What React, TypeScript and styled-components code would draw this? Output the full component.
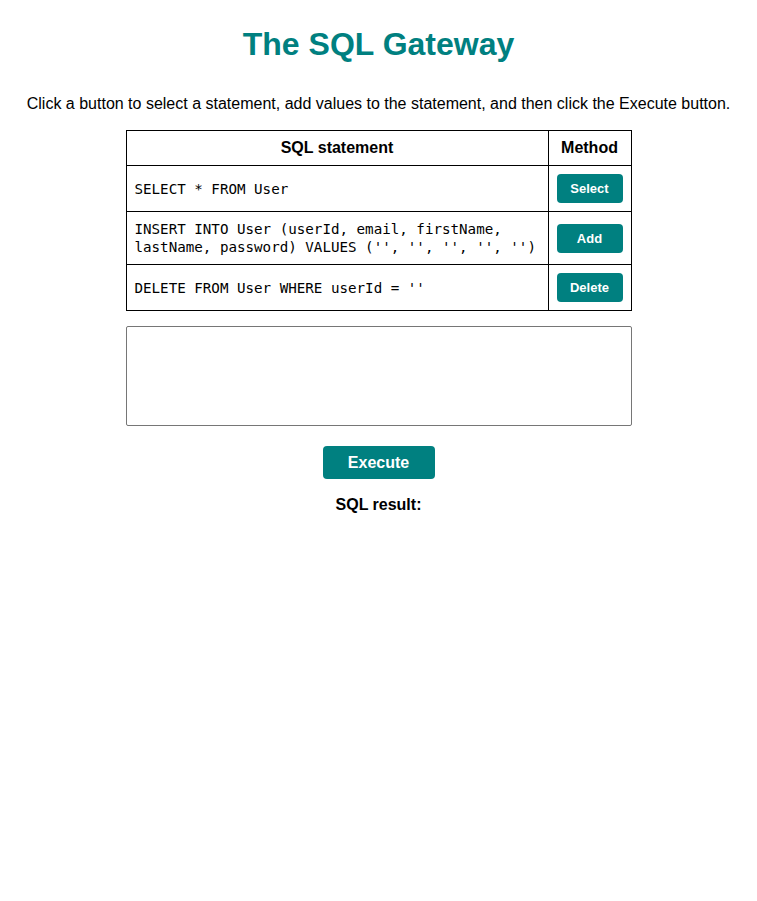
import React from "react";
import styled, { createGlobalStyle } from "styled-components";

const Global = createGlobalStyle`
  body {
    margin: 8px;
    font-family: "Liberation Sans", Arial, sans-serif;
    background: #ffffff;
    color: #000000;
  }
`;

const Page = styled.main`
  display: flex;
  flex-direction: column;
  align-items: center;
`;

const Title = styled.h1`
  color: #008080;
  font-size: 32px;
  font-weight: bold;
  margin: 18px 0 0;
  line-height: 37px;
`;

const Intro = styled.p`
  font-size: 16px;
  margin: 32px 0 0;
  line-height: 18px;
  text-align: center;
`;

const Table = styled.table`
  border-collapse: collapse;
  width: 506px;
  margin-top: 17px;
`;

const HeadCell = styled.th`
  border: 1px solid #000;
  padding: 8px;
  font-size: 16px;
  line-height: 18px;
  font-weight: bold;
  text-align: center;
`;

const Cell = styled.td<{ $center?: boolean }>`
  border: 1px solid #000;
  padding: 8px;
  font-family: "DejaVu Sans Mono", monospace;
  font-size: 14.2px;
  line-height: 18px;
  text-align: ${(p) => (p.$center ? "center" : "left")};
  vertical-align: middle;
`;

const SmallButton = styled.button`
  width: 66px;
  height: 29px;
  border: none;
  border-radius: 4px;
  background: #008080;
  color: #fff;
  font-family: "Liberation Sans", Arial, sans-serif;
  font-size: 13px;
  font-weight: bold;
  padding: 0;
  cursor: pointer;
  display: block;
  margin: 0 auto;
`;

const Statement = styled.textarea`
  box-sizing: border-box;
  width: 506px;
  height: 100px;
  margin-top: 15px;
  border: 1px solid #767676;
  border-radius: 2px;
  resize: none;
  font-family: "DejaVu Sans Mono", monospace;
  font-size: 14px;
  display: block;
`;

const ExecuteButton = styled.button`
  width: 112px;
  height: 33px;
  margin-top: 20px;
  border: none;
  border-radius: 4px;
  background: #008080;
  color: #fff;
  font-family: "Liberation Sans", Arial, sans-serif;
  font-size: 16px;
  font-weight: bold;
  cursor: pointer;
`;

const ResultLabel = styled.p`
  margin: 17px 0 0;
  font-size: 16px;
  line-height: 18px;
  font-weight: bold;
`;

const rows = [
  { sql: "SELECT * FROM User", label: "Select" },
  {
    sql: "INSERT INTO User (userId, email, firstName, lastName, password) VALUES ('', '', '', '', '')",
    label: "Add",
  },
  { sql: "DELETE FROM User WHERE userId = ''", label: "Delete" },
];

export default function App() {
  const [text, setText] = React.useState("");
  return (
    <>
      <Global />
      <Page>
        <Title>The SQL Gateway</Title>
        <Intro>
          Click a button to select a statement, add values to the statement, and then click the Execute button.
        </Intro>
        <Table>
          <thead>
            <tr>
              <HeadCell>SQL statement</HeadCell>
              <HeadCell>Method</HeadCell>
            </tr>
          </thead>
          <tbody>
            {rows.map((r) => (
              <tr key={r.label}>
                <Cell>{r.sql}</Cell>
                <Cell $center>
                  <SmallButton onClick={() => setText(r.sql)}>{r.label}</SmallButton>
                </Cell>
              </tr>
            ))}
          </tbody>
        </Table>
        <Statement value={text} onChange={(e) => setText(e.target.value)} />
        <ExecuteButton>Execute</ExecuteButton>
        <ResultLabel>SQL result:</ResultLabel>
      </Page>
    </>
  );
}
